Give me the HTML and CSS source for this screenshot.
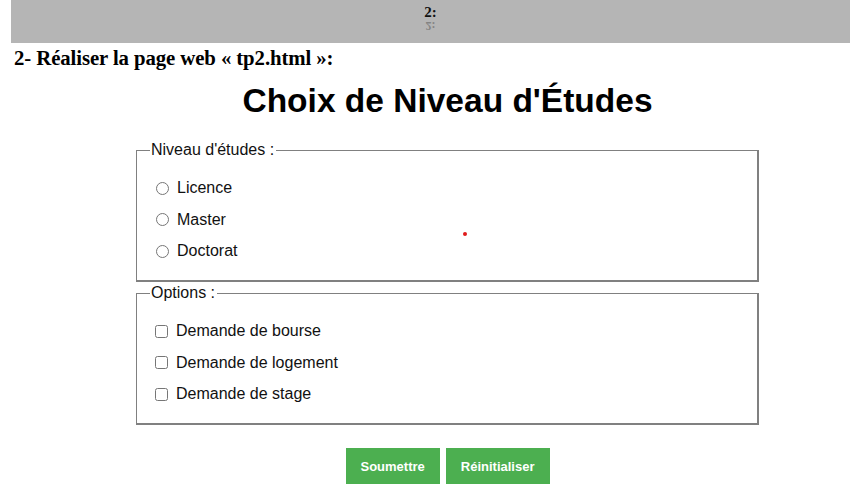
FILE: index.html
```html
<!DOCTYPE html>
<html lang="fr">
<head>
<meta charset="utf-8">
<title>tp2</title>
<link rel="stylesheet" href="styles.css">
</head>
<body>
<div class="bar"><span class="num">2:</span><span class="reflect">2:</span></div>
<p class="step">2- Réaliser la page web « tp2.html »:</p>
<div class="shot">
  <h1 class="title">Choix de Niveau d'Études</h1>
  <form class="form">
    <fieldset class="group">
      <legend class="legend">Niveau d'études :</legend>
      <label class="row"><input type="radio" name="niveau" class="radio">Licence</label>
      <label class="row"><input type="radio" name="niveau" class="radio">Master</label>
      <label class="row"><input type="radio" name="niveau" class="radio">Doctorat</label>
      <span class="dot"></span>
    </fieldset>
    <fieldset class="group">
      <legend class="legend">Options :</legend>
      <label class="row"><input type="checkbox" class="check">Demande de bourse</label>
      <label class="row"><input type="checkbox" class="check">Demande de logement</label>
      <label class="row"><input type="checkbox" class="check">Demande de stage</label>
    </fieldset>
    <div class="actions">
      <button type="button" class="btn">Soumettre</button>
      <button type="button" class="btn">Réinitialiser</button>
    </div>
  </form>
</div>
</body>
</html>
```
FILE: styles.css
```css
html, body {
  margin: 0;
  padding: 0;
  background: #fff;
}
body {
  width: 860px;
  height: 492px;
  overflow: hidden;
}
.bar {
  margin: 0 10px 0 11px;
  height: 43px;
  background: #b5b5b5;
  display: flex;
  flex-direction: column;
  align-items: center;
  padding-top: 5px;
  box-sizing: border-box;
  font-family: "Liberation Serif", serif;
  font-weight: bold;
  font-size: 15px;
  color: #111;
  overflow: hidden;
}
.num {
  line-height: 14px;
}
.reflect {
  line-height: 9px;
  font-size: 12px;
  transform: scaleY(-1);
  opacity: 0.3;
  margin-top: 2px;
}
.step {
  margin: 3px 0 0 14px;
  font-family: "Liberation Serif", serif;
  font-weight: bold;
  font-size: 20.8px;
  line-height: 24px;
  color: #000;
  letter-spacing: -0.1px;
}
.shot {
  padding-left: 35px;
  font-family: "Liberation Sans", Arial, sans-serif;
  color: #000;
}
.title {
  margin: 11px 0 0;
  text-align: center;
  font-size: 33.5px;
  line-height: 40px;
  font-weight: bold;
}
.form {
  width: 623px;
  margin: 20px auto 0;
  display: flex;
  flex-direction: column;
}
.group {
  position: relative;
  margin: 0 0 2px;
  padding: 18px 0 18px 17px;
  border-color: #808080;
  border-style: solid;
  border-width: 1px 2px 2px 1px;
  display: flex;
  flex-direction: column;
  gap: 9.5px;
}
.legend {
  font-size: 16px;
  padding: 0 2px 0 1px;
  margin-left: -4px;
  line-height: 18px;
  color: #111;
}
.row {
  display: flex;
  align-items: center;
  font-size: 16px;
  line-height: 22px;
  color: #111;
}
.radio, .check {
  margin: 0 8px 0 2px;
  width: 13px;
  height: 13px;
}
.check {
  margin: 0 8px 0 1px;
}
.dot {
  position: absolute;
  left: 326px;
  top: 73px;
  width: 4px;
  height: 4px;
  border-radius: 50%;
  background: #e01b1b;
}
.actions {
  display: flex;
  justify-content: center;
  gap: 6px;
  margin-top: 21px;
}
.btn {
  background: #4caf50;
  color: #fff;
  border: none;
  font-family: "Liberation Sans", Arial, sans-serif;
  font-weight: bold;
  font-size: 13px;
  height: 36px;
  padding: 0 15px;
}
```
